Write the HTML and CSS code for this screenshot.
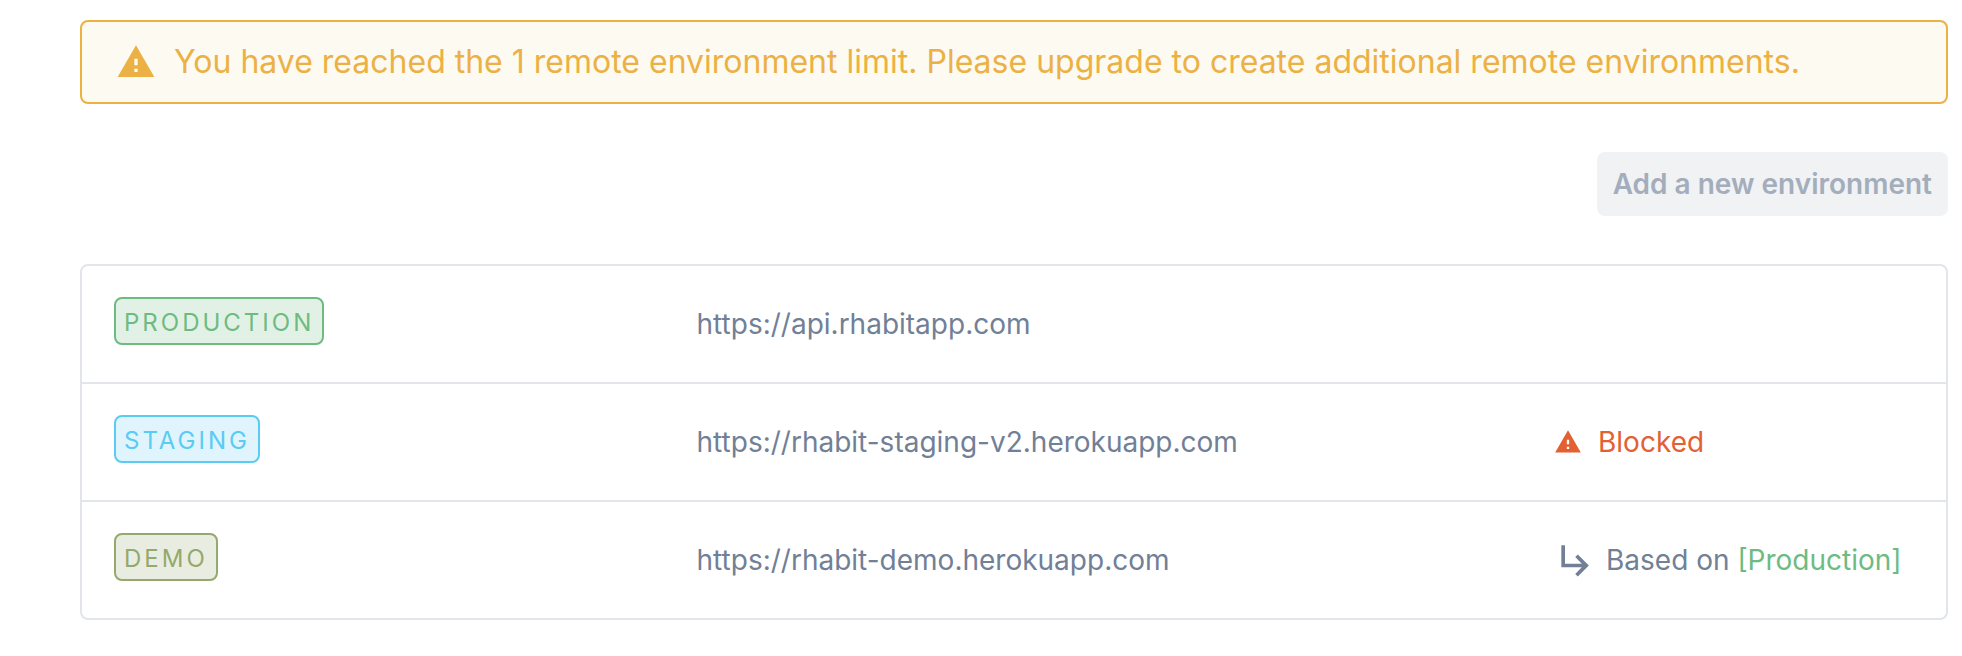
FILE: index.html
```
<!DOCTYPE html>
<html lang="en">
<head>
  <meta charset="utf-8">
  <title>Environments</title>
  <link rel="stylesheet" href="styles.css">
</head>
<body>
  <main class="page">
    <div class="alert" role="alert">
      <svg class="alert-icon" viewBox="0 0 24 24" aria-hidden="true"><path d="M1 21h22L12 2 1 21zm12-3h-2v-2h2v2zm0-4h-2v-4h2v4z"/></svg>
      <span>You have reached the 1 remote environment limit. Please upgrade to create additional remote environments.</span>
    </div>

    <div class="actions">
      <button type="button" class="btn" disabled>Add a new environment</button>
    </div>

    <table class="env-table">
      <colgroup>
        <col>
        <col class="col-url">
        <col class="col-status">
      </colgroup>
      <tbody>
        <tr>
          <td class="name"><span class="tag production">PRODUCTION</span></td>
          <td>https://api.rhabitapp.com</td>
          <td></td>
        </tr>
        <tr>
          <td class="name"><span class="tag staging">STAGING</span></td>
          <td>https://rhabit-staging-v2.herokuapp.com</td>
          <td>
            <div class="status blocked">
              <svg class="status-icon" viewBox="0 0 24 24" aria-hidden="true"><path d="M1 21h22L12 2 1 21zm12-3h-2v-2h2v2zm0-4h-2v-4h2v4z"/></svg>
              <span>Blocked</span>
            </div>
          </td>
        </tr>
        <tr>
          <td class="name"><span class="tag demo">DEMO</span></td>
          <td>https://rhabit-demo.herokuapp.com</td>
          <td>
            <div class="status based">
              <svg class="based-icon" viewBox="0 0 24 24" aria-hidden="true"><path d="M19 15l-6 6-1.42-1.42L15.17 16H4V4h2v10h9.17l-3.59-3.58L13 9l6 6z"/></svg>
              <span>Based on <span class="based-env">[Production]</span></span>
            </div>
          </td>
        </tr>
      </tbody>
    </table>
  </main>
</body>
</html>
```

FILE: styles.css
```
*{box-sizing:border-box}
body{margin:0;background:#fff;color:#718096;font-family:Inter,"Liberation Sans",sans-serif;font-size:28px;line-height:42px}
.page{padding:20px 14px 36px 80px}
svg{flex:none;fill:currentColor}
.alert{display:flex;align-items:center;gap:18px;padding:16px 34px;border:2px solid #ecb144;border-radius:8px;background:#fdfaf2;color:#ecb144;font-size:32px;line-height:48px}
.alert-icon{width:40px;height:40px}
.actions{display:flex;justify-content:flex-end;margin:48px 0}
.btn{height:64px;padding:0 16px;border:none;border-radius:8px;background:#f0f2f4;color:#a3adbb;font-family:inherit;font-size:28px;font-weight:600}
.env-table{width:100%;table-layout:fixed;border:2px solid #e2e5ea;border-collapse:separate;border-spacing:0;border-radius:8px}
.col-url{width:46%}
.col-status{width:424px}
.env-table td{height:118px;padding:0 32px;border-bottom:2px solid #e2e5ea;white-space:nowrap}
.env-table tr:last-child td{height:116px;border-bottom:none}
.env-table .name{padding-top:31px;vertical-align:top}
.tag{display:block;width:fit-content;padding:6px 8px 2px;border:2px solid;border-radius:8px;font-size:24px;line-height:36px;letter-spacing:3px}
.production{color:#6ebb82;background:#e2f1e6}
.staging{color:#5acbf2;background:#dff4fd}
.demo{color:#94a96b;background:#e9ede1}
.status{display:flex;align-items:center;gap:16px}
.status-icon{width:28px;height:28px}
.based{gap:8px}
.based-icon{width:44px;height:44px}
.blocked{color:#e36032}
.based-env{color:#6ebb82}
```
